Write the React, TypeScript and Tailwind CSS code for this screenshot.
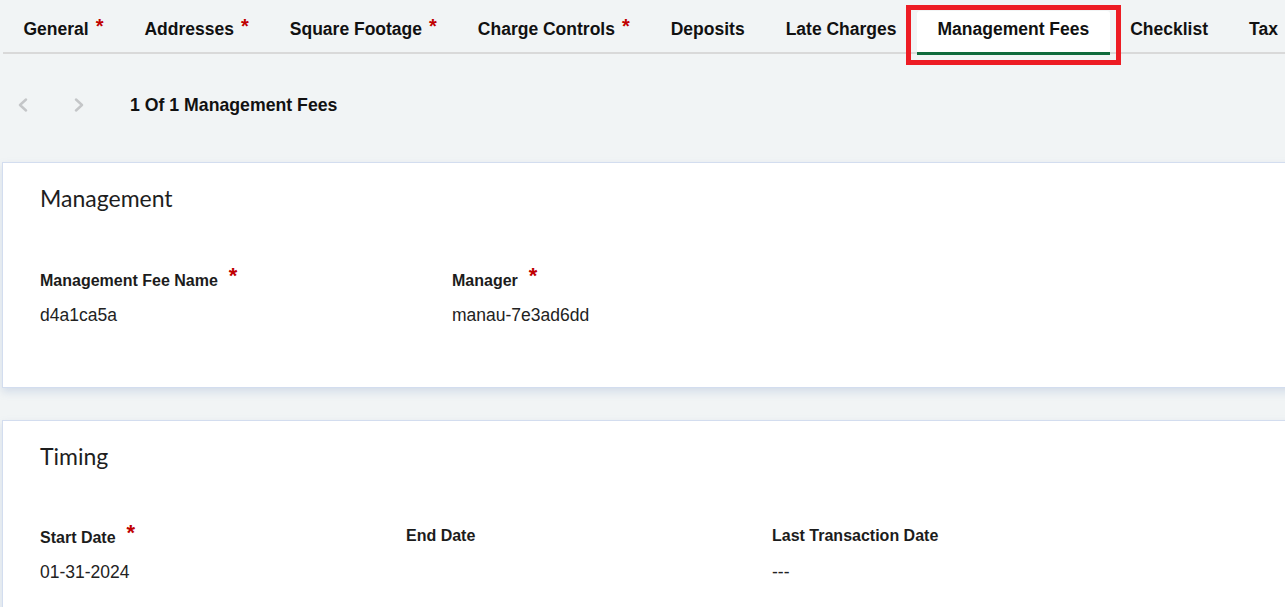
import React from "react";

type Tab = { label: string; required?: boolean };

const tabs: Tab[] = [
  { label: "General", required: true },
  { label: "Addresses", required: true },
  { label: "Square Footage", required: true },
  { label: "Charge Controls", required: true },
  { label: "Deposits" },
  { label: "Late Charges" },
  { label: "Management Fees" },
  { label: "Checklist" },
  { label: "Tax" },
];

const ACTIVE = "Management Fees";

const Chevron: React.FC<{ dir: "left" | "right" }> = ({ dir }) => (
  <svg width="12" height="14" viewBox="0 0 12 14" fill="none">
    <polyline
      points={dir === "left" ? "9,1.5 3,7 9,12.5" : "3,1.5 9,7 3,12.5"}
      stroke="#c4c6c8"
      strokeWidth="2.4"
      strokeLinecap="round"
      strokeLinejoin="round"
    />
  </svg>
);

const Field: React.FC<{ label: string; value?: string; required?: boolean; width: string }> = ({
  label,
  value,
  required,
  width,
}) => (
  <div className={width}>
    <div className="flex items-start h-[22px]">
      <span className={`text-[16px] leading-[20px] font-bold text-[#1c1c1c] ${required ? "mt-[2px]" : ""}`}>
        {label}
      </span>
      {required && (
        <span className="ml-[11px] -mt-[4px] text-[22px] leading-[22px] font-bold text-[#c00000]">*</span>
      )}
    </div>
    <div className="mt-[13px] h-[22px] text-[17.5px] leading-[22px] text-[#222]">{value}</div>
  </div>
);

const Card: React.FC<{ title: string; children: React.ReactNode; className?: string }> = ({
  title,
  children,
  className,
}) => (
  <section
    className={`w-[1330px] bg-white border border-[#d3ddef] shadow-[0_4px_8px_rgba(110,140,190,0.22)] pl-[37px] pt-[21px] ${className ?? ""}`}
  >
    <h2 className="font-['Lato'] text-[23px] leading-[28px] text-[#1e1e1e]">{title}</h2>
    {children}
  </section>
);

export default function App() {
  return (
    <div className="min-h-screen w-full overflow-hidden bg-[#f1f4f5] font-['Liberation_Sans',Arial,sans-serif]">
      {/* tab strip */}
      <div className="ml-[3px] flex h-[54px] items-end border-b-2 border-[#d9d9d9]">
        {tabs.map((t) => {
          const active = t.label === ACTIVE;
          return (
            <div
              key={t.label}
              className={`relative flex h-[43px] shrink-0 items-start px-[20.5px] pt-[8px] -mb-[2px] ${
                active ? "bg-white rounded-t-[3px]" : ""
              }`}
            >
              <span className="whitespace-nowrap text-[17.5px] leading-[20px] font-bold text-[#111]">{t.label}</span>
              {t.required && (
                <span className="ml-[7px] -mt-[3px] text-[20px] leading-[20px] font-bold text-[#c00000]">*</span>
              )}
              {active && (
                <>
                  <span className="absolute left-0 right-0 -bottom-[1px] h-[3px] bg-[#0f6a3b]" />
                  <span className="pointer-events-none absolute -left-[11px] -right-[11px] -top-[6px] -bottom-[11px] border-[5px] border-[#ed1c24]" />
                </>
              )}
            </div>
          );
        })}
      </div>

      {/* record pager */}
      <div className="mt-[26px] flex h-[50px] items-center pl-[17px]">
        <button className="flex h-[24px] w-[12px] items-center">
          <Chevron dir="left" />
        </button>
        <button className="ml-[44px] flex h-[24px] w-[12px] items-center">
          <Chevron dir="right" />
        </button>
        <span className="ml-[45px] text-[17.7px] font-bold text-[#111]">1 Of 1 Management Fees</span>
      </div>

      <div className="ml-[2px] mt-[32px]">
        <Card title="Management" className="pb-[61px]">
          <div className="mt-[57px] flex">
            <Field width="w-[412px]" label="Management Fee Name" value="d4a1ca5a" required />
            <Field width="w-[412px]" label="Manager" value="manau-7e3ad6dd" required />
          </div>
        </Card>

        <Card title="Timing" className="mt-[32px] pb-[40px]">
          <div className="mt-[56px] flex">
            <Field width="w-[366px]" label="Start Date" value="01-31-2024" required />
            <Field width="w-[366px]" label="End Date" />
            <Field width="w-[366px]" label="Last Transaction Date" value="---" />
          </div>
        </Card>
      </div>
    </div>
  );
}
